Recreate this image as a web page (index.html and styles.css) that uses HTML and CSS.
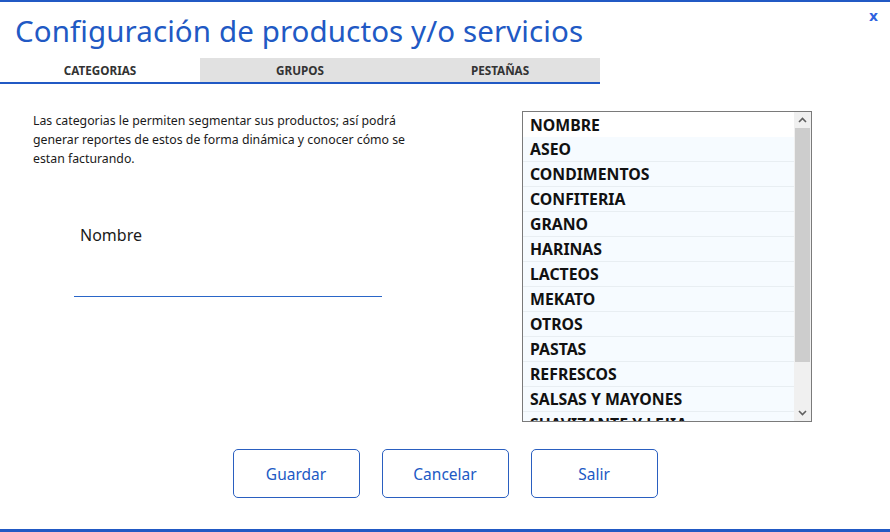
FILE: index.html
```html
<!DOCTYPE html>
<html lang="es">
<head>
<meta charset="utf-8">
<title>Configuración de productos y/o servicios</title>
<link rel="stylesheet" href="styles.css">
</head>
<body>
<div class="frame">
  <header class="header">
    <h1 class="title">Configuración de productos y/o servicios</h1>
    <span class="close">x</span>
  </header>
  <nav class="tabs">
    <div class="tab active">CATEGORIAS</div>
    <div class="tab">GRUPOS</div>
    <div class="tab">PESTAÑAS</div>
  </nav>
  <main class="content">
    <section class="left">
      <p class="desc">Las categorias le permiten segmentar sus productos; así podrá generar reportes de estos de forma dinámica y conocer cómo se estan facturando.</p>
      <div class="field">
        <label class="label">Nombre</label>
        <div class="input"></div>
      </div>
    </section>
    <section class="listbox">
      <div class="rows">
        <div class="row head">NOMBRE</div>
        <div class="row">ASEO</div>
        <div class="row">CONDIMENTOS</div>
        <div class="row">CONFITERIA</div>
        <div class="row">GRANO</div>
        <div class="row">HARINAS</div>
        <div class="row">LACTEOS</div>
        <div class="row">MEKATO</div>
        <div class="row">OTROS</div>
        <div class="row">PASTAS</div>
        <div class="row">REFRESCOS</div>
        <div class="row">SALSAS Y MAYONES</div>
        <div class="row">SUAVIZANTE Y LEJIA</div>
      </div>
      <div class="scrollbar">
        <div class="arrow">
          <svg width="9" height="6" viewBox="0 0 9 6"><path d="M1 5 L4.5 1.5 L8 5" fill="none" stroke="#606060" stroke-width="1.6"/></svg>
        </div>
        <div class="thumb"></div>
        <div class="track"></div>
        <div class="arrow">
          <svg width="9" height="6" viewBox="0 0 9 6"><path d="M1 1 L4.5 4.5 L8 1" fill="none" stroke="#606060" stroke-width="1.6"/></svg>
        </div>
      </div>
    </section>
  </main>
  <footer class="buttons">
    <button class="btn">Guardar</button>
    <button class="btn">Cancelar</button>
    <button class="btn">Salir</button>
  </footer>
</div>
</body>
</html>
```

FILE: styles.css
```css
* { box-sizing: border-box; }
html, body { margin: 0; padding: 0; background: #fff; }
body { font-family: "Noto Sans", "Open Sans", sans-serif; color: #1a1a1a; }
.frame {
  width: 890px;
  height: 532px;
  border-top: 2px solid #2159c4;
  border-bottom: 3px solid #2159c4;
  display: flex;
  flex-direction: column;
  overflow: hidden;
}
.header {
  display: flex;
  justify-content: space-between;
  align-items: flex-start;
  height: 56px;
}
.title {
  margin: 11px 0 0 15px;
  font-size: 29.5px;
  font-weight: 400;
  color: #2159c4;
  line-height: 36px;
  letter-spacing: 0.1px;
}
.close {
  margin: 6px 12px 0 0;
  font-family: "DejaVu Sans", sans-serif;
  font-size: 14px;
  font-weight: 700;
  color: #2f62e0;
  line-height: 16px;
}
.tabs {
  display: flex;
  width: 600px;
  height: 26px;
  border-bottom: 2px solid #2159c4;
}
.tab {
  width: 200px;
  background: #e1e1e1;
  font-size: 11.7px;
  font-weight: 700;
  color: #333;
  text-align: center;
  line-height: 24px;
}
.tab.active { background: #fff; }
.content {
  display: flex;
  justify-content: space-between;
  padding: 27px 78px 0 33px;
  height: 339px;
}
.left { width: 400px; }
.desc {
  margin: 0;
  font-size: 12.3px;
  line-height: 19px;
  color: #1a1a1a;
}
.field { margin: 56px 0 0 41px; width: 308px; }
.label {
  display: block;
  margin-left: 6px;
  font-size: 16px;
  color: #1a1a1a;
  line-height: 22px;
}
.input {
  height: 51px;
  border-bottom: 1px solid #2a66c8;
}
.listbox {
  width: 290px;
  height: 311px;
  margin-top: 0;
  border: 1px solid #7a7a7a;
  display: flex;
  overflow: hidden;
}
.rows { flex: 1; }
.row {
  height: 25px;
  padding-left: 7px;
  font-size: 15.8px;
  font-weight: 700;
  line-height: 25px;
  color: #111;
  background: #f6fbff;
  border-bottom: 1px solid #e8eef2;
  white-space: nowrap;
}
.row.head { background: #fff; border-bottom: none; height: 25px; line-height: 26px; }
.scrollbar {
  width: 17px;
  background: #f0f0f0;
  display: flex;
  flex-direction: column;
}
.arrow {
  height: 16px;
  display: flex;
  align-items: center;
  justify-content: center;
}
.thumb {
  height: 234px;
  background: #cdcdcd;
  margin: 0 1px;
}
.track { flex: 1; }
.buttons {
  display: flex;
  justify-content: center;
  gap: 22px;
  padding-top: 26px;
}
.btn {
  width: 127px;
  height: 49px;
  background: #fff;
  border: 1px solid #2a5fc0;
  border-radius: 5px;
  font-family: "Noto Sans", "Open Sans", sans-serif;
  font-size: 15.5px;
  color: #2159c4;
  padding: 0;
}
```
